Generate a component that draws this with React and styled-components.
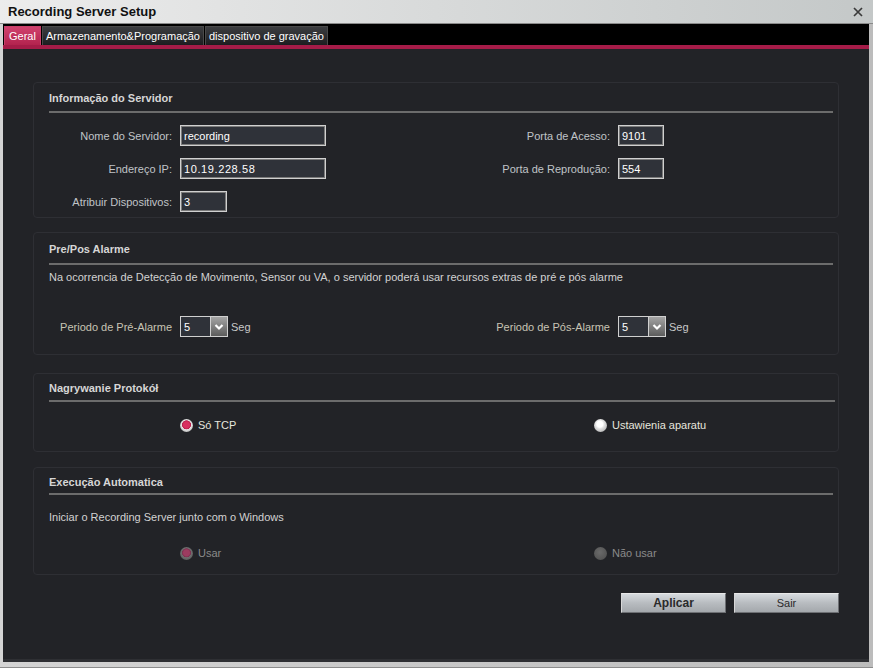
import React from "react"
import styled, { createGlobalStyle } from "styled-components"

const Global = createGlobalStyle`
  html, body { margin: 0; padding: 0; background: #c8c8c8; }
  body { font-family: "Liberation Sans", Arial, sans-serif; font-size: 11px; }
`

const Window = styled.div`
  width: 873px;
  height: 668px;
  box-sizing: border-box;
  display: flex;
  flex-direction: column;
  background: linear-gradient(to right, #d4d4d4, #bcbcbc);
  border-bottom: 1px solid #8c8c8c;
`

const TitleBar = styled.div`
  height: 24px;
  flex: none;
  display: flex;
  align-items: center;
  justify-content: space-between;
  padding: 0 10px 0 8px;
  box-sizing: border-box;
  background: linear-gradient(to right, #ececec, #d8dada 50%, #c4c8c8);
  border-bottom: 1px solid #8a8a8a;
`

const Title = styled.span`
  font-weight: bold;
  font-size: 13px;
  color: #111;
`

const Close = styled.svg`
  width: 10px;
  height: 10px;
`

const Body = styled.div`
  flex: 1;
  display: flex;
  flex-direction: column;
  margin: 0 4px 5px 3px;
  background: #222327;
  border-bottom: 3px solid #2e2f33;
`

const TabStrip = styled.div`
  height: 21px;
  flex: none;
  display: flex;
  align-items: flex-end;
  padding-left: 1px;
  background: #000;
  border-bottom: 4px solid #a51c48;
`

const Tab = styled.div`
  height: 19px;
  box-sizing: border-box;
  display: flex;
  align-items: center;
  padding: 0 ${p => p.$px}px;
  margin-right: 1px;
  color: #fff;
  font-size: 11px;
  border: 1px solid ${p => (p.$active ? "#c8406a" : "#4a4a4a")};
  border-bottom: none;
  background: ${p =>
    p.$active
      ? "linear-gradient(#d0426e, #b3234e)"
      : "linear-gradient(#3c3d40, #1c1d20)"};
`

const Content = styled.div`
  flex: 1;
  display: flex;
  flex-direction: column;
  padding: 33px 30px 0 30px;
`

const Group = styled.div`
  border: 1px solid #2e2f34;
  border-radius: 4px;
  padding: ${p => p.$pt}px 5px ${p => p.$pb}px 15px;
  margin-top: ${p => p.$mt || 0}px;
  background: #222327;
`

const GroupTitle = styled.div`
  font-weight: bold;
  font-size: 11px;
  line-height: 14px;
  color: #d6d6d6;
`

const Rule = styled.div`
  height: 2px;
  background: #6c6c6c;
  margin-top: ${p => p.$mt}px;
  margin-right: ${p => p.$mr || 0}px;
`

const Rows = styled.div`
  display: grid;
  grid-template-columns: 1fr 1fr;
  row-gap: 12px;
  margin-top: ${p => p.$mt}px;
`

const Field = styled.div`
  display: flex;
  align-items: center;
  gap: 8px;
  height: 21px;
`

const Label = styled.span`
  width: ${p => p.$w}px;
  flex: none;
  text-align: right;
  color: ${p => p.$color || "#c0c4c8"};
  white-space: nowrap;
`

const TextBox = styled.div`
  width: ${p => p.$w}px;
  height: 21px;
  box-sizing: border-box;
  display: flex;
  align-items: center;
  padding-left: 3px;
  background: #2f3239;
  border: 1px solid #d0d0d0;
  box-shadow: inset 0 0 0 1px #7a7a7a;
  color: #fff;
  letter-spacing: ${p => (p.$mono ? "0.6px" : "0")};
`

const Desc = styled.div`
  line-height: 14px;
  color: #d2d2d2;
  margin-top: ${p => p.$mt}px;
`

const Combo = styled.div`
  display: flex;
  height: 21px;
  box-sizing: border-box;
  border: 1px solid #d0d0d0;
  box-shadow: inset 0 0 0 1px #7a7a7a;
`

const ComboValue = styled.div`
  width: 29px;
  display: flex;
  align-items: center;
  padding-left: 3px;
  box-sizing: border-box;
  color: #fff;
  background: #2f3239;
`

const ComboBtn = styled.div`
  width: 16px;
  display: flex;
  align-items: center;
  justify-content: center;
  background: linear-gradient(#a4a4a4, #5c5c5c);
  border-left: 1px solid #d0d0d0;
`

const Unit = styled.span`
  color: #c8c8c8;
  margin-left: -5px;
`

const RadioRow = styled.div`
  display: grid;
  grid-template-columns: 1fr 1fr;
  margin-top: ${p => p.$mt}px;
`

const RadioItem = styled.label`
  display: flex;
  align-items: center;
  gap: 5px;
  height: 16px;
  padding-left: ${p => p.$pl}px;
  color: ${p => (p.$disabled ? "#8a8a8a" : "#e6e6de")};
`

const Dot = styled.span`
  width: 13px;
  height: 13px;
  border-radius: 50%;
  box-sizing: border-box;
  flex: none;
  ${p => {
    if (p.$checked && !p.$disabled)
      return `background: radial-gradient(circle at 50% 45%, #d83060 0 3px, #b8204c 4.2px, #e6e6e6 4.8px, #8e8e8e 100%);`
    if (p.$checked && p.$disabled)
      return `background: radial-gradient(circle at 50% 45%, #9c3c60 0 3px, #7e3050 4.2px, #6e6e6e 4.8px, #4a4a4a 100%);`
    if (p.$disabled)
      return `background: radial-gradient(circle at 45% 40%, #6a6a6a, #4c4c4c);`
    return `background: radial-gradient(circle at 45% 40%, #ffffff 0 3px, #e2e2e2 4.5px, #9a9a9a 100%);`
  }}
`

const Footer = styled.div`
  display: flex;
  justify-content: flex-end;
  gap: 8px;
  margin-top: 18px;
`

const Button = styled.button`
  width: 105px;
  height: 20px;
  padding: 0;
  font-family: "Liberation Sans", Arial, sans-serif;
  font-size: ${p => (p.$primary ? "12px" : "11px")};
  font-weight: ${p => (p.$primary ? "bold" : "normal")};
  color: #2a2a2a;
  background: linear-gradient(#d6dade, #b8bcc0 50%, #a4a8ac);
  border: 1px solid #6e7074;
  border-top-color: #e8e8e8;
  border-left-color: #d8d8d8;
`

const Chevron = () => (
  <svg width="10" height="8" viewBox="0 0 10 8">
    <path d="M1.5 2 L5 5.5 L8.5 2" stroke="#fff" strokeWidth="2.2" fill="none" />
  </svg>
)

function Select({ value }) {
  return (
    <Combo>
      <ComboValue>{value}</ComboValue>
      <ComboBtn>
        <Chevron />
      </ComboBtn>
    </Combo>
  )
}

function Radio({ checked, disabled, children, pl }) {
  return (
    <RadioItem $disabled={disabled} $pl={pl}>
      <Dot $checked={checked} $disabled={disabled} />
      {children}
    </RadioItem>
  )
}

export default function App() {
  return (
    <>
      <Global />
      <Window>
        <TitleBar>
          <Title>Recording Server Setup</Title>
          <Close viewBox="0 0 10 10">
            <path d="M1 1 L9 9 M9 1 L1 9" stroke="#3a3a3a" strokeWidth="1.7" />
          </Close>
        </TitleBar>
        <Body>
          <TabStrip>
            <Tab $active $px={4}>Geral</Tab>
            <Tab $px={3}>Armazenamento&amp;Programação</Tab>
            <Tab $px={3}>dispositivo de gravação</Tab>
          </TabStrip>
          <Content>
            <Group $pt={8} $pb={5}>
              <GroupTitle>Informação do Servidor</GroupTitle>
              <Rule $mt={6} />
              <Rows $mt={12}>
                <Field>
                  <Label $w={123}>Nome do Servidor:</Label>
                  <TextBox $w={146}>recording</TextBox>
                </Field>
                <Field>
                  <Label $w={169}>Porta de Acesso:</Label>
                  <TextBox $w={46}>9101</TextBox>
                </Field>
                <Field>
                  <Label $w={123}>Endereço IP:</Label>
                  <TextBox $w={146} $mono>10.19.228.58</TextBox>
                </Field>
                <Field>
                  <Label $w={169}>Porta de Reprodução:</Label>
                  <TextBox $w={46}>554</TextBox>
                </Field>
                <Field>
                  <Label $w={123}>Atribuir Dispositivos:</Label>
                  <TextBox $w={47}>3</TextBox>
                </Field>
              </Rows>
            </Group>

            <Group $mt={14} $pt={9} $pb={17}>
              <GroupTitle>Pre/Pos Alarme</GroupTitle>
              <Rule $mt={7} />
              <Desc $mt={5}>
                Na ocorrencia de Detecção de Movimento, Sensor ou VA, o servidor poderá usar recursos extras de pré e pós alarme
              </Desc>
              <Rows $mt={32}>
                <Field>
                  <Label $w={123} $color="#c8c4b4">Periodo de Pré-Alarme</Label>
                  <Select value="5" />
                  <Unit>Seg</Unit>
                </Field>
                <Field>
                  <Label $w={169} $color="#c8c4b4">Periodo de Pós-Alarme</Label>
                  <Select value="5" />
                  <Unit>Seg</Unit>
                </Field>
              </Rows>
            </Group>

            <Group $mt={18} $pt={7} $pb={18}>
              <GroupTitle>Nagrywanie Protokół</GroupTitle>
              <Rule $mt={5} $mr={-2} />
              <RadioRow $mt={15}>
                <Radio checked pl={131}>Só TCP</Radio>
                <Radio pl={153}>Ustawienia aparatu</Radio>
              </RadioRow>
            </Group>

            <Group $mt={15} $pt={7} $pb={13}>
              <GroupTitle>Execução Automatica</GroupTitle>
              <Rule $mt={4} />
              <Desc $mt={15}>Iniciar o Recording Server junto com o Windows</Desc>
              <RadioRow $mt={21}>
                <Radio checked disabled pl={131}>Usar</Radio>
                <Radio disabled pl={153}>Não usar</Radio>
              </RadioRow>
            </Group>

            <Footer>
              <Button $primary>Aplicar</Button>
              <Button>Sair</Button>
            </Footer>
          </Content>
        </Body>
      </Window>
    </>
  )
}
